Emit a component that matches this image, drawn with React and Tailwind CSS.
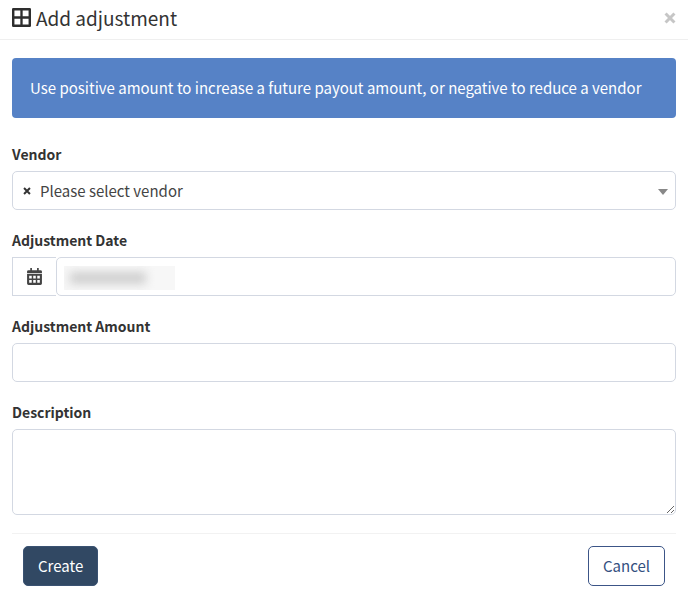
import React from "react";

const fieldClass = "w-full rounded-[5px] border border-[#d3d8e2] bg-white leading-6 text-[#444] outline-none";

function Field({ label, htmlFor, children }) {
  return (
    <div className="mb-[18px]">
      <label htmlFor={htmlFor} className="mb-[5px] block text-[14px] leading-6 font-bold text-[#333]">
        {label}
      </label>
      {children}
    </div>
  );
}

function GridIcon() {
  return (
    <svg viewBox="0 0 18 18" className="h-[19px] w-[19px]" aria-hidden="true">
      <path
        fill="#2e2e2e"
        fillRule="evenodd"
        d="M1.2 0H16.8Q18 0 18 1.2V16.8Q18 18 16.8 18H1.2Q0 18 0 16.8V1.2Q0 0 1.2 0ZM2.3 2.3V7.9H7.9V2.3ZM10.1 2.3V7.9H15.7V2.3ZM2.3 10.1V15.7H7.9V10.1ZM10.1 10.1V15.7H15.7V10.1Z"
      />
    </svg>
  );
}

function CalendarIcon() {
  return (
    <svg viewBox="0 0 14 16" className="h-[17px] w-[15px]" aria-hidden="true">
      <path
        fill="#444"
        fillRule="evenodd"
        d="M3 0H4.6V2H9.4V0H11V2H12.6Q14 2 14 3.4V4.6H0V3.4Q0 2 1.4 2H3ZM0 5.4H14V14.6Q14 16 12.6 16H1.4Q0 16 0 14.6ZM2 7.4V9.8H4.4V7.4ZM5.8 7.4V9.8H8.2V7.4ZM9.6 7.4V9.8H12V7.4ZM2 11.4V13.8H4.4V11.4ZM5.8 11.4V13.8H8.2V11.4ZM9.6 11.4V13.8H12V11.4Z"
      />
    </svg>
  );
}

function Cross({ className }) {
  return (
    <svg viewBox="0 0 10 10" className={className} aria-hidden="true">
      <path d="M1.3 1.3L8.7 8.7M8.7 1.3L1.3 8.7" stroke="currentColor" strokeWidth="2.5" />
    </svg>
  );
}

export default function App() {
  return (
    <div className="min-h-screen bg-white font-['Noto_Sans_CJK_SC',sans-serif] text-[#333]">
      <header className="flex h-10 items-center justify-between border-b border-[#efefef] px-3 pb-1">
        <h1 className="flex items-center gap-[5px] text-[19px] leading-6">
          <GridIcon />
          Add adjustment
        </h1>
        <button type="button" aria-label="Close" className="text-[#c6c6c6]">
          <Cross className="h-3 w-3" />
        </button>
      </header>

      <form className="px-3 pt-[18px]" onSubmit={(e) => e.preventDefault()}>
        <div className="mb-6 rounded-[4px] bg-[#5682c6] px-[18px] py-[18px] text-[15px] leading-6 text-white">
          Use positive amount to increase a future payout amount, or negative to reduce a vendor
        </div>

        <Field label="Vendor" htmlFor="vendor">
          <div className="relative">
            <select id="vendor" className={fieldClass + " h-[39px] appearance-none pr-8 pl-[27px] text-[15px]"}>
              <option>Please select vendor</option>
            </select>
            <button type="button" aria-label="Clear vendor" className="absolute top-4 left-[11px] text-[#333]">
              <Cross className="block h-2 w-2" />
            </button>
            <svg viewBox="0 0 10 6" className="pointer-events-none absolute top-[18px] right-2 h-[6px] w-[10px]" aria-hidden="true">
              <path d="M0 0H10L5 6Z" fill="#888" />
            </svg>
          </div>
        </Field>

        <Field label="Adjustment Date" htmlFor="date">
          <div className="flex">
            <span className="flex h-[39px] w-11 shrink-0 items-center justify-center border border-r-0 border-[#d3d8e2]">
              <CalendarIcon />
            </span>
            <div className="relative flex-1">
              <input id="date" type="text" className={fieldClass + " block h-[39px] px-3 text-[15px]"} />
              <div className="pointer-events-none absolute top-[9px] left-2 h-6 w-[111px] overflow-hidden bg-[#f7f7f7]">
                <div className="mt-[6px] ml-[6px] h-3 w-[76px] bg-[#cfcfcf] blur-[5px]" />
              </div>
            </div>
          </div>
        </Field>

        <Field label="Adjustment Amount" htmlFor="amount">
          <input id="amount" type="text" className={fieldClass + " block h-[39px] px-3 text-[15px]"} />
        </Field>

        <Field label="Description" htmlFor="description">
          <textarea id="description" className={fieldClass + " block h-[86px] resize-y px-3 py-2 text-[15px]"} />
        </Field>

        <div className="flex justify-between border-t border-[#f2f2f2] px-[11px] pt-3 pb-6">
          <button
            type="submit"
            className="h-10 rounded-[5px] border border-[#3a5272] bg-[#314863] px-[14px] text-[15px] leading-6 text-white"
          >
            Create
          </button>
          <button
            type="button"
            className="h-10 rounded-[5px] border border-[#3c5587] bg-white px-[14px] text-[15px] leading-6 text-[#34507f]"
          >
            Cancel
          </button>
        </div>
      </form>
    </div>
  );
}
